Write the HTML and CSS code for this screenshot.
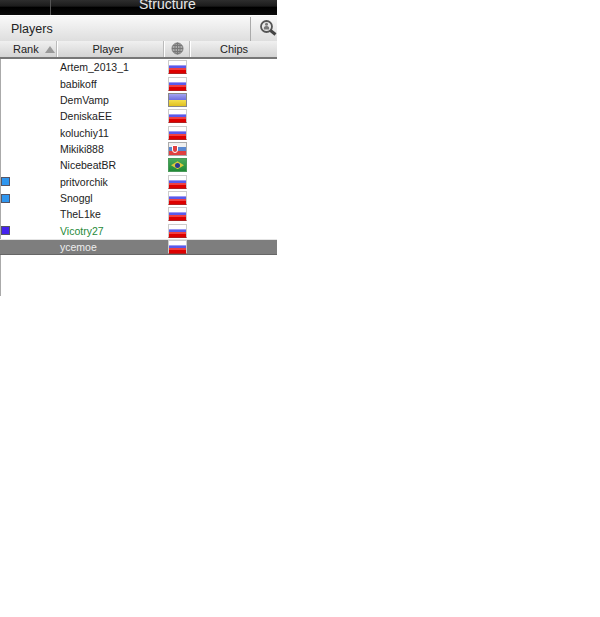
FILE: index.html
```html
<!DOCTYPE html>
<html lang="en">
<head>
<meta charset="utf-8">
<title>Players</title>
<link rel="stylesheet" href="styles.css">
</head>
<body>
<div class="panel">
  <div class="tabs">
    <div class="tab tab-first"></div>
    <div class="tab tab-active">Structure</div>
  </div>
  <div class="title-bar">
    <div class="title">Players</div>
    <div class="search">
      <svg width="19" height="19" viewBox="0 0 19 19"><circle cx="7.5" cy="7.5" r="5.5" fill="#e8e8e8" stroke="#555" stroke-width="1.8"/><path d="M5 10.500c-.8-2 .3-3.500 2.500-3.500s3.200 1.500 2.500 3.500z" fill="#777"/><circle cx="7.500" cy="5.200" r="1.500" fill="#777"/><path d="M11.500 11.500L16.500 15.500" stroke="#444" stroke-width="3"/></svg>
    </div>
  </div>
  <div class="head">
    <div class="hc hc-rank">Rank<span class="arrow"></span></div>
    <div class="hc hc-player">Player</div>
    <div class="hc hc-globe">
      <svg width="13" height="13" viewBox="0 0 13 13" fill="none" stroke="#777" stroke-width="1"><circle cx="6.500" cy="6.500" r="5.500" fill="#aaa"/><ellipse cx="6.500" cy="6.500" rx="2.600" ry="5.500"/><path d="M1 6.500h11M2 3.500h9M2 9.500h9M6.500 1v11"/></svg>
    </div>
    <div class="hc hc-chips">Chips</div>
  </div>
  <div class="list">
    <div class="row"><span class="rank"></span><span class="name">Artem_2013_1</span><span class="flag ru"></span></div>
    <div class="row"><span class="rank"></span><span class="name">babikoff</span><span class="flag ru"></span></div>
    <div class="row"><span class="rank"></span><span class="name">DemVamp</span><span class="flag ua"></span></div>
    <div class="row"><span class="rank"></span><span class="name">DeniskaEE</span><span class="flag ru"></span></div>
    <div class="row"><span class="rank"></span><span class="name">koluchiy11</span><span class="flag ru"></span></div>
    <div class="row"><span class="rank"></span><span class="name">Mikiki888</span><span class="flag sk"><i class="sk-shield"></i></span></div>
    <div class="row"><span class="rank"></span><span class="name">NicebeatBR</span><span class="flag br"><i class="br-diamond"></i></span></div>
    <div class="row"><span class="rank"><i class="mark mark-blue"></i></span><span class="name">pritvorchik</span><span class="flag ru"></span></div>
    <div class="row"><span class="rank"><i class="mark mark-blue"></i></span><span class="name">Snoggl</span><span class="flag ru"></span></div>
    <div class="row"><span class="rank"></span><span class="name">TheL1ke</span><span class="flag ru"></span></div>
    <div class="row"><span class="rank"><i class="mark mark-violet"></i></span><span class="name name-green">Vicotry27</span><span class="flag ru"></span></div>
    <div class="row row-selected"><span class="rank"></span><span class="name">ycemoe</span><span class="flag ru"></span></div>
  </div>
</div>
</body>
</html>
```
FILE: styles.css
```css
html, body {
  margin: 0;
  padding: 0;
  background: #fff;
}
.panel {
  width: 277px;
  height: 296px;
  display: flex;
  flex-direction: column;
  font-family: "Liberation Sans", Arial, sans-serif;
  overflow: hidden;
}
.tabs {
  height: 15px;
  display: flex;
  background: linear-gradient(#2e2e2e, #1c1c1c 40%, #000 50%, #0a0a0a);
  flex: none;
}
.tab-first {
  width: 50px;
  border-right: 1px solid #555;
}
.tab-active {
  flex: 1;
  color: #e8e8e8;
  font-size: 14px;
  line-height: 9px;
  padding-left: 88px;
  overflow: hidden;
}
.title-bar {
  height: 25px;
  flex: none;
  display: flex;
  background: linear-gradient(#f8f8f8, #dedede);
  border-top: 1px solid #f4f4f4;
  box-sizing: border-box;
  margin-top: 1px;
}
.title {
  flex: 1;
  padding-left: 11px;
  font-size: 12.500px;
  line-height: 24px;
  color: #222;
}
.search {
  width: 27px;
  border-left: 1px solid #aaa;
  box-sizing: border-box;
  padding: 2px 0 0 8px;
}
.head {
  height: 18px;
  flex: none;
  display: flex;
  box-sizing: border-box;
  background: linear-gradient(#f0f0f0, #d4d4d4);
  border-bottom: 2px solid #777;
  font-size: 11px;
  line-height: 16px;
  color: #222;
  text-align: center;
}
.hc {
  box-sizing: border-box;
  border-right: 1px solid #fff;
  box-shadow: inset -1px 0 0 #bbb;
}
.hc-rank {
  width: 58px;
  padding-left: 13px;
  text-align: left;
  position: relative;
}
.arrow {
  position: absolute;
  left: 45px;
  top: 5px;
  border-left: 5px solid transparent;
  border-right: 5px solid transparent;
  border-bottom: 7px solid #999;
}
.hc-player {
  width: 107px;
  padding-right: 6px;
}
.hc-globe {
  width: 26px;
  padding: 1px 1px 0 0;
  line-height: 0;
}
.hc-chips {
  flex: 1;
  border-right: 0;
  box-shadow: none;
}
.list {
  flex: 1;
  border-left: 1px solid #aaa;
}
.row {
  height: 16.360px;
  display: flex;
  align-items: center;
  font-size: 10.500px;
  color: #222;
}
.rank {
  width: 59px;
  flex: none;
  display: flex;
}
.mark {
  width: 7px;
  height: 7px;
  border: 1px solid #556;
  display: block;
}
.mark-blue { background: #2f96ef; }
.mark-violet { background: #4422ee; }
.name {
  width: 108px;
  flex: none;
}
.name-green { color: #1f8a3a; }
.row-selected {
  background: #7e7e7e;
  box-shadow: inset 0 1px 0 #e4e4e4, inset 0 -1px 0 #666;
  margin-left: -1px;
  padding-left: 1px;
  color: #eee;
}
.flag {
  width: 19px;
  height: 14px;
  flex: none;
  box-sizing: border-box;
  border: 1px solid #ccc;
  position: relative;
  display: block;
}
.ru {
  background: linear-gradient(#fff 0 30%, #9a9af4 30% 40%, #5a5aea 40% 62%, #f04040 62% 72%, #dd0000 72%);
  border-color: #ccc #ccc #b02020;
}
.ua {
  background: linear-gradient(#a4a4f0, #7070e0 48%, #f4e050 50%, #e0c020);
  border-color: #888;
}
.sk {
  background: linear-gradient(#f0f0f0 0 33%, #5a88d0 33% 66%, #e04040 66%);
  border-color: #aaa;
}
.sk-shield {
  position: absolute;
  left: 3px;
  top: 2px;
  width: 4px;
  height: 6px;
  background: #e04040;
  border: 1px solid #fff;
  border-radius: 0 0 3px 3px;
}
.br {
  background: linear-gradient(#4aaa5a, #1f8a35);
  border-color: #4a9a5a;
}
.br-diamond {
  position: absolute;
  left: 2px;
  top: 2px;
  width: 13px;
  height: 8px;
  background: #d8c840;
  clip-path: polygon(50% 0, 100% 50%, 50% 100%, 0 50%);
}
.br-diamond::after {
  content: "";
  position: absolute;
  left: 4px;
  top: 1.500px;
  width: 5px;
  height: 5px;
  border-radius: 50%;
  background: #2a3a90;
}
```
